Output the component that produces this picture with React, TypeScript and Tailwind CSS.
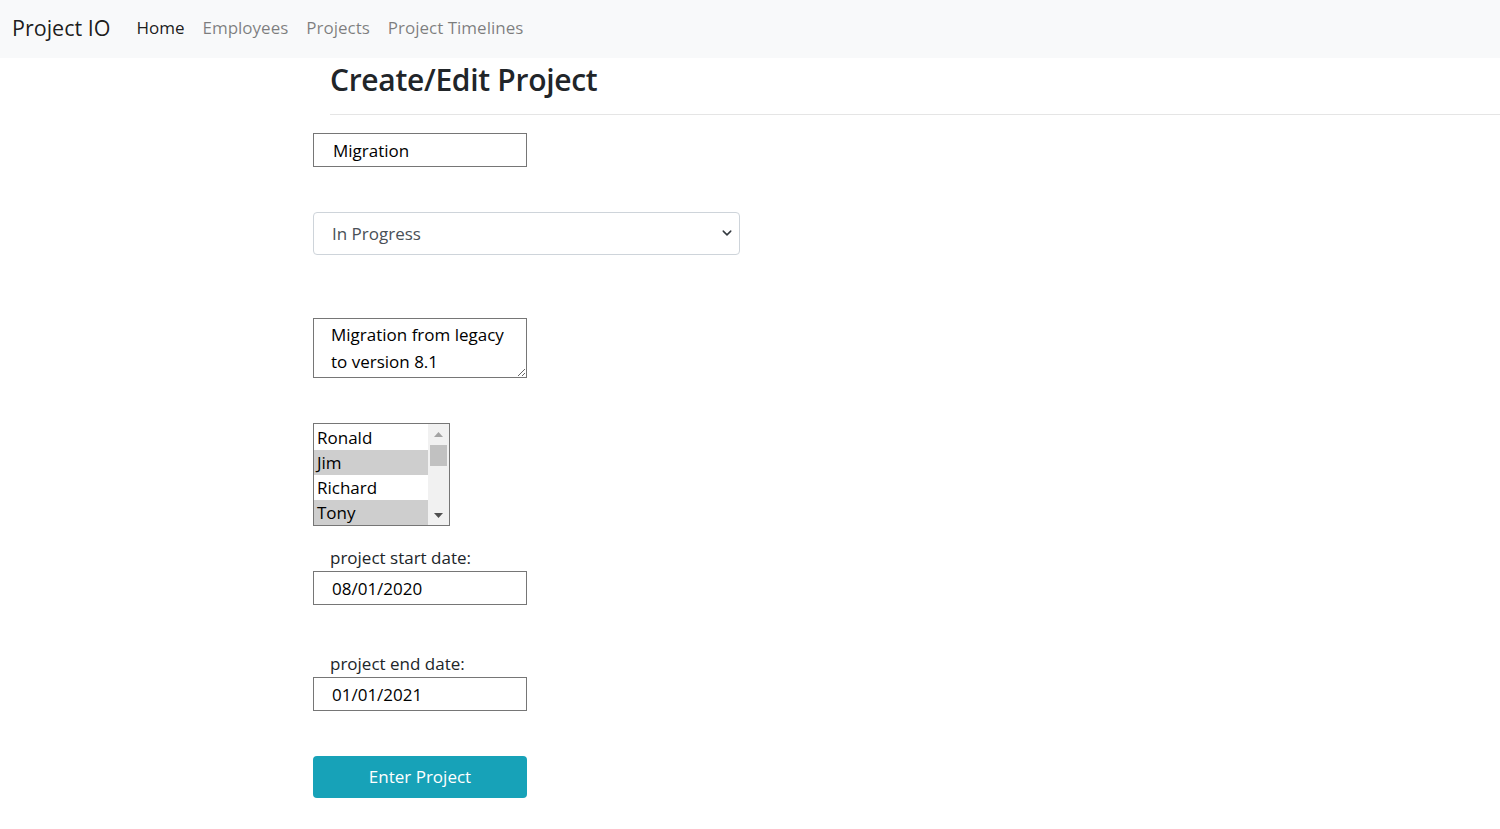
import React from 'react';

const names = [
  { name: 'Ronald', selected: false },
  { name: 'Jim', selected: true },
  { name: 'Richard', selected: false },
  { name: 'Tony', selected: true },
];

const fieldFont = { fontFamily: '"Open Sans", "Noto Sans", sans-serif' };

export default function App() {
  return (
    <div className="min-h-[829px] bg-white text-[#212529]" style={fieldFont}>
      {/* Navbar */}
      <nav className="flex h-[58px] items-center bg-[#f8f9fa] px-3 pb-[2px]">
        <span className="mr-[26px] text-[21.5px] text-black/90">Project IO</span>
        <div className="flex items-center gap-[18px] text-[17px]">
          <span className="text-black/90">Home</span>
          <span className="text-black/50">Employees</span>
          <span className="text-black/50">Projects</span>
          <span className="text-black/50">Project Timelines</span>
        </div>
      </nav>

      <div className="ml-[313px]">
        {/* Heading */}
        <div className="ml-[17px] border-b border-[#e5e5e5] pb-[14px] pt-[2px]">
          <h2 className="text-[30px] font-semibold leading-[40px] tracking-[-0.3px]">Create/Edit Project</h2>
        </div>

        <form className="flex flex-col items-start pt-[18px]" onSubmit={(e) => e.preventDefault()}>
          <input
            defaultValue="Migration"
            className="h-[34px] w-[214px] border border-[#767676] pl-[19px] text-[17px] text-black outline-none"
          />

          <div className="relative mt-[45px] w-[427px]">
            <select
              defaultValue="In Progress"
              className="h-[43px] w-full appearance-none rounded-[4px] border border-[#ced4da] bg-white pl-[18px] text-[17px] text-[#495057] outline-none"
            >
              <option>Not Started</option>
              <option>In Progress</option>
              <option>Completed</option>
            </select>
            <svg
              className="pointer-events-none absolute right-[8px] top-[16px]"
              width="10"
              height="10"
              viewBox="0 0 16 16"
            >
              <path d="M2 5l6 6 6-6" fill="none" stroke="#343a40" strokeWidth="2.4" strokeLinecap="round" strokeLinejoin="round" />
            </svg>
          </div>

          <textarea
            defaultValue={'Migration from legacy to version 8.1'}
            className="mt-[63px] h-[60px] w-[214px] border border-[#767676] pl-[17px] pr-[10px] pt-[2px] text-[17px] leading-[27px] text-black outline-none"
          />

          {/* Employee list */}
          <div className="mt-[45px] flex h-[103px] w-[137px] border border-[#767676] bg-white">
            <div className="flex flex-1 flex-col pt-[1px]">
              {names.map((n) => (
                <div
                  key={n.name}
                  className={`h-[25px] pl-[3px] text-[17px] leading-[25px] text-black ${n.selected ? 'bg-[#cecece]' : ''}`}
                >
                  {n.name}
                </div>
              ))}
            </div>
            <div className="flex w-[21px] flex-col items-center bg-[#f1f1f1]">
              <svg className="mt-[8px]" width="9" height="5" viewBox="0 0 9 5">
                <path d="M0 5L4.5 0L9 5Z" fill="#a3a3a3" />
              </svg>
              <div className="mt-[8px] h-[21px] w-[17px] bg-[#c1c1c1]" />
              <svg className="mt-auto mb-[7px]" width="9" height="5" viewBox="0 0 9 5">
                <path d="M0 0L4.5 5L9 0Z" fill="#505050" />
              </svg>
            </div>
          </div>

          <label className="ml-[17px] mt-[19px] text-[17px] leading-[26px] text-[#212529]">project start date:</label>
          <input
            defaultValue="08/01/2020"
            className="h-[34px] w-[214px] border border-[#767676] pl-[18px] text-[17px] text-black outline-none"
          />

          <label className="ml-[17px] mt-[46px] text-[17px] leading-[26px] text-[#212529]">project end date:</label>
          <input
            defaultValue="01/01/2021"
            className="h-[34px] w-[214px] border border-[#767676] pl-[18px] text-[17px] text-black outline-none"
          />

          <button
            type="submit"
            className="mt-[45px] h-[42px] w-[214px] rounded-[4px] bg-[#17a2b8] text-[17px] text-white"
          >
            Enter Project
          </button>
        </form>
      </div>
    </div>
  );
}
